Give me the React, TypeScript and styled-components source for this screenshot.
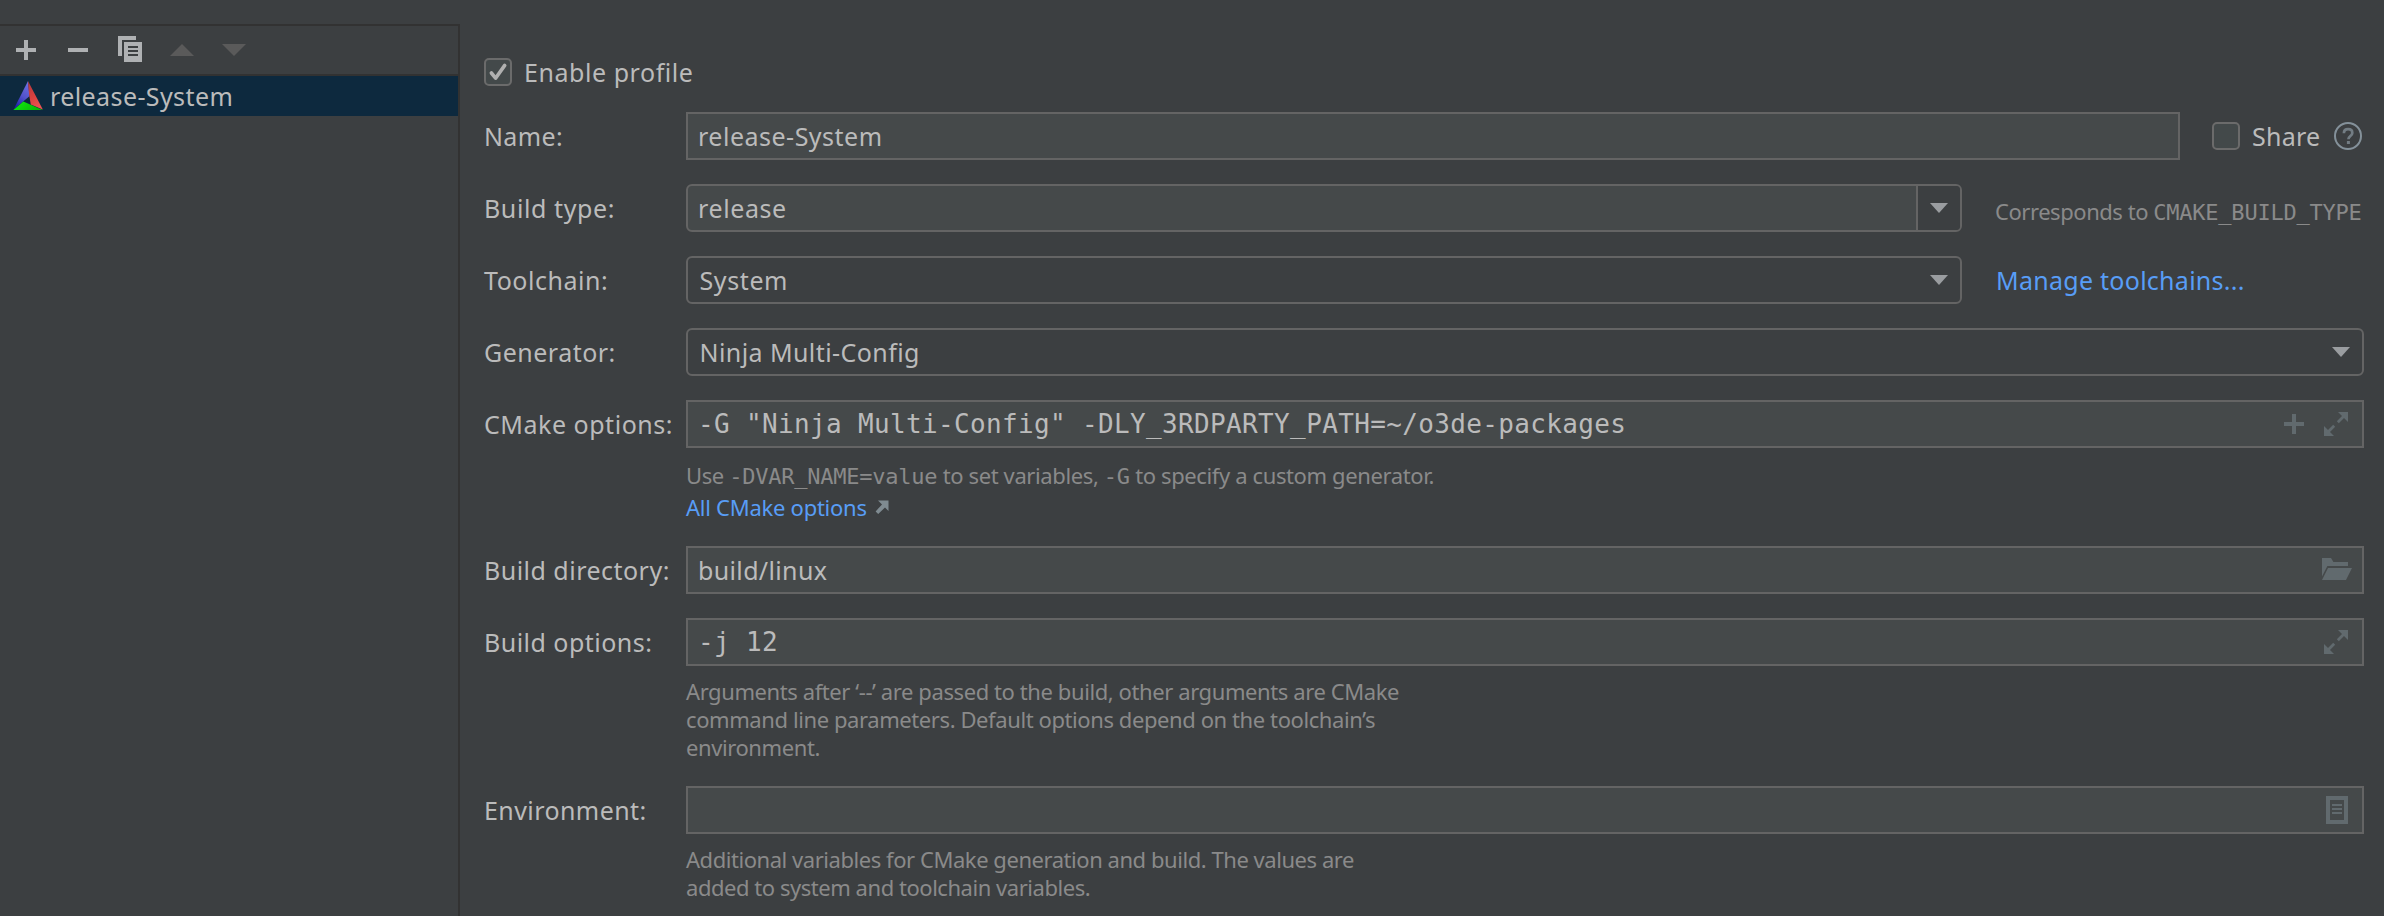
import React from 'react';
import styled, { createGlobalStyle, css } from 'styled-components';

const GlobalStyle = createGlobalStyle`
  *, *::before, *::after { box-sizing: border-box; }
  body {
    margin: 0;
    background: #3c3f41;
    color: #bbbbbb;
    font-family: 'Noto Sans', 'Open Sans', sans-serif;
    font-size: 25px;
    letter-spacing: 0.5px;
    overflow: hidden;
  }
`;

const Page = styled.main`
  display: flex;
  width: 2384px;
  height: 916px;
  overflow: hidden;
`;

/* ---- Profile list ---- */

const Sidebar = styled.aside`
  flex: none;
  width: 460px;
  margin-top: 24px;
  border-top: 2px solid #323232;
  border-right: 2px solid #323232;
`;

const Toolbar = styled.div`
  display: flex;
  align-items: center;
  gap: 20px;
  height: 50px;
  padding: 0 10px;
  border-bottom: 2px solid #323232;
`;

const ToolButton = styled.button`
  display: flex;
  width: 32px;
  height: 32px;
  padding: 0;
  border: 0;
  background: none;
  color: #afb1b3;

  &:disabled { color: #5a5a5a; }
`;

const ProfileItem = styled.div`
  display: flex;
  align-items: center;
  gap: 6px;
  height: 40px;
  padding-left: 12px;
  background: #0d293e;
  letter-spacing: 0.4px;
`;

/* ---- Form ---- */

const Form = styled.section`
  display: flex;
  flex: 1;
  flex-direction: column;
  padding: 58px 20px 0 24px;
`;

const CheckLabel = styled.label<{ $track?: number }>`
  display: flex;
  align-items: center;
  gap: 12px;
  height: 28px;
  line-height: 28px;
  white-space: nowrap;
  letter-spacing: ${({ $track = 0.55 }) => $track}px;
`;

const CheckBox = styled.span`
  display: flex;
  flex: none;
  width: 28px;
  height: 28px;
  border: 2px solid #6b6b6b;
  border-radius: 5px;
  background: #43494a;
`;

const Rows = styled.div`
  display: flex;
  flex-direction: column;
  gap: 24px;
  margin-top: 26px;
`;

const Row = styled.div`
  display: grid;
  grid-template-columns: 202px 1fr;
`;

const Label = styled.label<{ $track?: number }>`
  height: 48px;
  line-height: 48px;
  white-space: nowrap;
  letter-spacing: ${({ $track = 0.52 }) => $track}px;
`;

const Line = styled.div`
  display: flex;
  gap: 32px;
`;

const fieldFrame = css`
  display: flex;
  flex: 1;
  height: 48px;
  border: 2px solid #646464;
  line-height: 44px;
  white-space: pre;
`;

const Field = styled.div<{ $mono?: boolean; $track?: number }>`
  ${fieldFrame}
  align-items: center;
  justify-content: space-between;
  padding: 0 10px;
  background: #45494a;
  letter-spacing: ${({ $track = 0.5 }) => $track}px;
  ${({ $mono }) => $mono && css`
    font-family: 'DejaVu Sans Mono', monospace;
    font-size: 26px;
    letter-spacing: 0.35px;
  `}
`;

const Combo = styled.div<{ $track?: number }>`
  ${fieldFrame}
  justify-content: space-between;
  padding-left: 11.5px;
  border-radius: 6px;
  letter-spacing: ${({ $track = 0.5 }) => $track}px;
`;

const EditableCombo = styled(Combo)`
  padding-left: 10px;
  background: #45494a;
`;

const ComboButton = styled.span<{ $divided?: boolean }>`
  display: flex;
  align-items: center;
  width: 44px;
  height: 44px;
  padding-left: 14px;
  ${({ $divided }) => $divided && css`
    padding-left: 12px;
    border-left: 2px solid #646464;
    border-radius: 0 4px 4px 0;
    background: #3c3f41;
  `}
`;

const FieldIcons = styled.span`
  display: flex;
  gap: 10px;
  color: #616a6e;
`;

const ShareGroup = styled.div`
  display: flex;
  align-items: center;
  justify-content: space-between;
  width: 152px;
  padding-right: 2px;
`;

const ComboAside = styled.div`
  width: 370px;
  padding-left: 1px;
  line-height: 48px;
  white-space: nowrap;
`;

const Link = styled.a<{ $track?: number }>`
  color: #589df6;
  letter-spacing: ${({ $track }) => ($track === undefined ? 'inherit' : `${$track}px`)};
`;

const ToolchainLink = styled(Link)`
  padding-left: 1px;
`;

const Hint = styled.p<{ $track?: number }>`
  margin: 0;
  color: #8a8a8a;
  font-size: 22px;
  line-height: 28px;
  letter-spacing: ${({ $track = -0.41 }) => $track}px;
  white-space: nowrap;
`;

const AsideHint = styled(Hint)`
  margin-top: 13px;
`;

const HintBlock = styled.div`
  padding: 13px 0 1px;
`;

const NoteBlock = styled.div`
  width: 720px;
  padding: 11px 0 1px;
`;

const ExternalLink = styled(Hint)`
  display: flex;
  align-items: center;
  gap: 8px;
  margin-top: 4px;
`;

const Code = styled.code`
  font-family: 'DejaVu Sans Mono', monospace;
  font-size: 22px;
  line-height: 0;
  letter-spacing: -0.24px;
`;

/* ---- Icons ---- */

const Glyph = styled.svg`
  display: block;
  flex: none;
`;

const Icon = ({ w, h, children }: { w: number; h: number; children: React.ReactNode }) => (
  <Glyph width={w} height={h} viewBox={`0 0 ${w} ${h}`} fill="currentColor">
    {children}
  </Glyph>
);

const PlusIcon = () => <Icon w={32} h={32}><path d="M14 6h4v8h8v4h-8v8h-4v-8H6v-4h8z" /></Icon>;
const MinusIcon = () => <Icon w={32} h={32}><path d="M6 14h20v4H6z" /></Icon>;
const CopyIcon = () => (
  <Icon w={32} h={32}>
    <path d="M4 2h18v4H8v16H4z" />
    <path fillRule="evenodd" d="M10 8h18v20H10zM14 12v2h10v-2zM14 16v2h10v-2zM14 20v2h10v-2z" />
  </Icon>
);
const UpIcon = () => <Icon w={32} h={32}><path d="M4 22 16 10 28 22z" /></Icon>;
const DownIcon = () => <Icon w={32} h={32}><path d="M4 10h24L16 22z" /></Icon>;

const CMakeIcon = () => (
  <Icon w={32} h={32}>
    <defs>
      <linearGradient id="blue" x1="0.7" y1="0" x2="0.3" y2="1">
        <stop offset="0" stopColor="#6d6ee0" />
        <stop offset="0.5" stopColor="#5253cc" />
        <stop offset="1" stopColor="#1c1ca8" />
      </linearGradient>
      <linearGradient id="red" x1="0.3" y1="0" x2="0.7" y2="1">
        <stop offset="0" stopColor="#b93a3e" />
        <stop offset="0.5" stopColor="#d9413f" />
        <stop offset="1" stopColor="#ee5552" />
      </linearGradient>
      <linearGradient id="green" x1="0" y1="0" x2="1" y2="0.3">
        <stop offset="0" stopColor="#10f010" />
        <stop offset="1" stopColor="#08b808" />
      </linearGradient>
    </defs>
    <path fill="url(#blue)" d="M16 1 17.4 16.2 1.6 29.6z" />
    <path fill="url(#red)" d="M16 1 30.8 29.6 18.8 24.6 17 14z" />
    <path fill="url(#green)" d="M1.4 30 11.3 21.6 30.6 30z" />
  </Icon>
);

const CheckIcon = () => (
  <Icon w={24} h={24}>
    <path d="m5.4 13 4.2 5.2L18.7 5.4" fill="none" stroke="#b0b0b0" strokeWidth="3.6" strokeLinecap="round" strokeLinejoin="round" />
  </Icon>
);
const HelpIcon = () => (
  <Icon w={28} h={28}>
    <circle cx="14" cy="14" r="13" fill="none" stroke="#84919a" strokeWidth="2" />
    <path d="M9.9 11.2C9.9 8.8 11.6 7.2 14.1 7.2s4.2 1.5 4.2 3.7c0 3-3.9 3.2-3.9 6.3" fill="none" stroke="#737d84" strokeWidth="2.7" />
    <path d="M12.9 19h3v3h-3z" fill="#737d84" />
  </Icon>
);
const Caret = () => <Icon w={18} h={10}><path fill="#9a9da0" d="M0 0h18L9 10z" /></Icon>;
const ExpandIcon = () => (
  <Icon w={32} h={32}>
    <path d="M18 4h10v10l-4-4-5.2 5.2-2-2L22 8z" />
    <path d="M4 18l4 4 5.2-5.2 2 2L10 24l4 4H4z" />
  </Icon>
);
const FolderIcon = () => (
  <Icon w={32} h={32}>
    <path d="M2 4h9l2.4 4H28v4H7.4L2 22.4z" />
    <path d="M8 14h24l-6 12H2z" />
  </Icon>
);
const ListIcon = () => (
  <Icon w={32} h={32}>
    <path fillRule="evenodd" d="M6 2h22v28H6zM10 6v20h14V6z" />
    <path d="M12 10h10v2H12zM12 14h10v2H12zM12 18h10v2H12z" />
  </Icon>
);
const ArrowOutIcon = () => (
  <Icon w={14} h={14}>
    <path fill="#7f8b91" d="M3 .5h10.5V11L10 7.5 3.2 14 .6 11.4 7 4.5z" />
  </Icon>
);

export default function App() {
  return (
    <>
      <GlobalStyle />
      <Page>
        <Sidebar>
          <Toolbar>
            <ToolButton><PlusIcon /></ToolButton>
            <ToolButton><MinusIcon /></ToolButton>
            <ToolButton><CopyIcon /></ToolButton>
            <ToolButton disabled><UpIcon /></ToolButton>
            <ToolButton disabled><DownIcon /></ToolButton>
          </Toolbar>
          <ProfileItem><CMakeIcon />release-System</ProfileItem>
        </Sidebar>

        <Form>
          <CheckLabel><CheckBox><CheckIcon /></CheckBox>Enable profile</CheckLabel>
          <Rows>
            <Row>
              <Label $track={0.37}>Name:</Label>
              <Line>
                <Field>release-System</Field>
                <ShareGroup>
                  <CheckLabel $track={0.27}><CheckBox />Share</CheckLabel>
                  <HelpIcon />
                </ShareGroup>
              </Line>
            </Row>

            <Row>
              <Label $track={0.6}>Build type:</Label>
              <Line>
                <EditableCombo $track={0.6}>release<ComboButton $divided><Caret /></ComboButton></EditableCombo>
                <ComboAside><AsideHint $track={-0.45}>Corresponds to <Code>CMAKE_BUILD_TYPE</Code></AsideHint></ComboAside>
              </Line>
            </Row>

            <Row>
              <Label>Toolchain:</Label>
              <Line>
                <Combo $track={0.6}>System<ComboButton><Caret /></ComboButton></Combo>
                <ComboAside><ToolchainLink $track={0.27}>Manage toolchains...</ToolchainLink></ComboAside>
              </Line>
            </Row>

            <Row>
              <Label $track={0.49}>Generator:</Label>
              <Combo $track={0.42}>Ninja Multi-Config<ComboButton><Caret /></ComboButton></Combo>
            </Row>

            <Row>
              <Label>CMake options:</Label>
              <div>
                <Field $mono>
                  {'-G "Ninja Multi-Config" -DLY_3RDPARTY_PATH=~/o3de-packages'}
                  <FieldIcons><PlusIcon /><ExpandIcon /></FieldIcons>
                </Field>
                <HintBlock>
                  <Hint $track={-0.38}>Use <Code>-DVAR_NAME=value</Code> to set variables, <Code>-G</Code> to specify a custom generator.</Hint>
                  <ExternalLink $track={-0.26}><Link>All CMake options</Link><ArrowOutIcon /></ExternalLink>
                </HintBlock>
              </div>
            </Row>

            <Row>
              <Label $track={0.48}>Build directory:</Label>
              <Field $track={0.35}>build/linux<FieldIcons><FolderIcon /></FieldIcons></Field>
            </Row>

            <Row>
              <Label $track={0.48}>Build options:</Label>
              <div>
                <Field $mono>-j 12<FieldIcons><ExpandIcon /></FieldIcons></Field>
                <NoteBlock>
                  <Hint>Arguments after ‘--’ are passed to the build, other arguments are CMake</Hint>
                  <Hint>command line parameters. Default options depend on the toolchain’s</Hint>
                  <Hint>environment.</Hint>
                </NoteBlock>
              </div>
            </Row>

            <Row>
              <Label $track={0.42}>Environment:</Label>
              <div>
                <Field><span /><FieldIcons><ListIcon /></FieldIcons></Field>
                <NoteBlock>
                  <Hint $track={-0.45}>Additional variables for CMake generation and build. The values are</Hint>
                  <Hint $track={-0.46}>added to system and toolchain variables.</Hint>
                </NoteBlock>
              </div>
            </Row>
          </Rows>
        </Form>
      </Page>
    </>
  );
}
